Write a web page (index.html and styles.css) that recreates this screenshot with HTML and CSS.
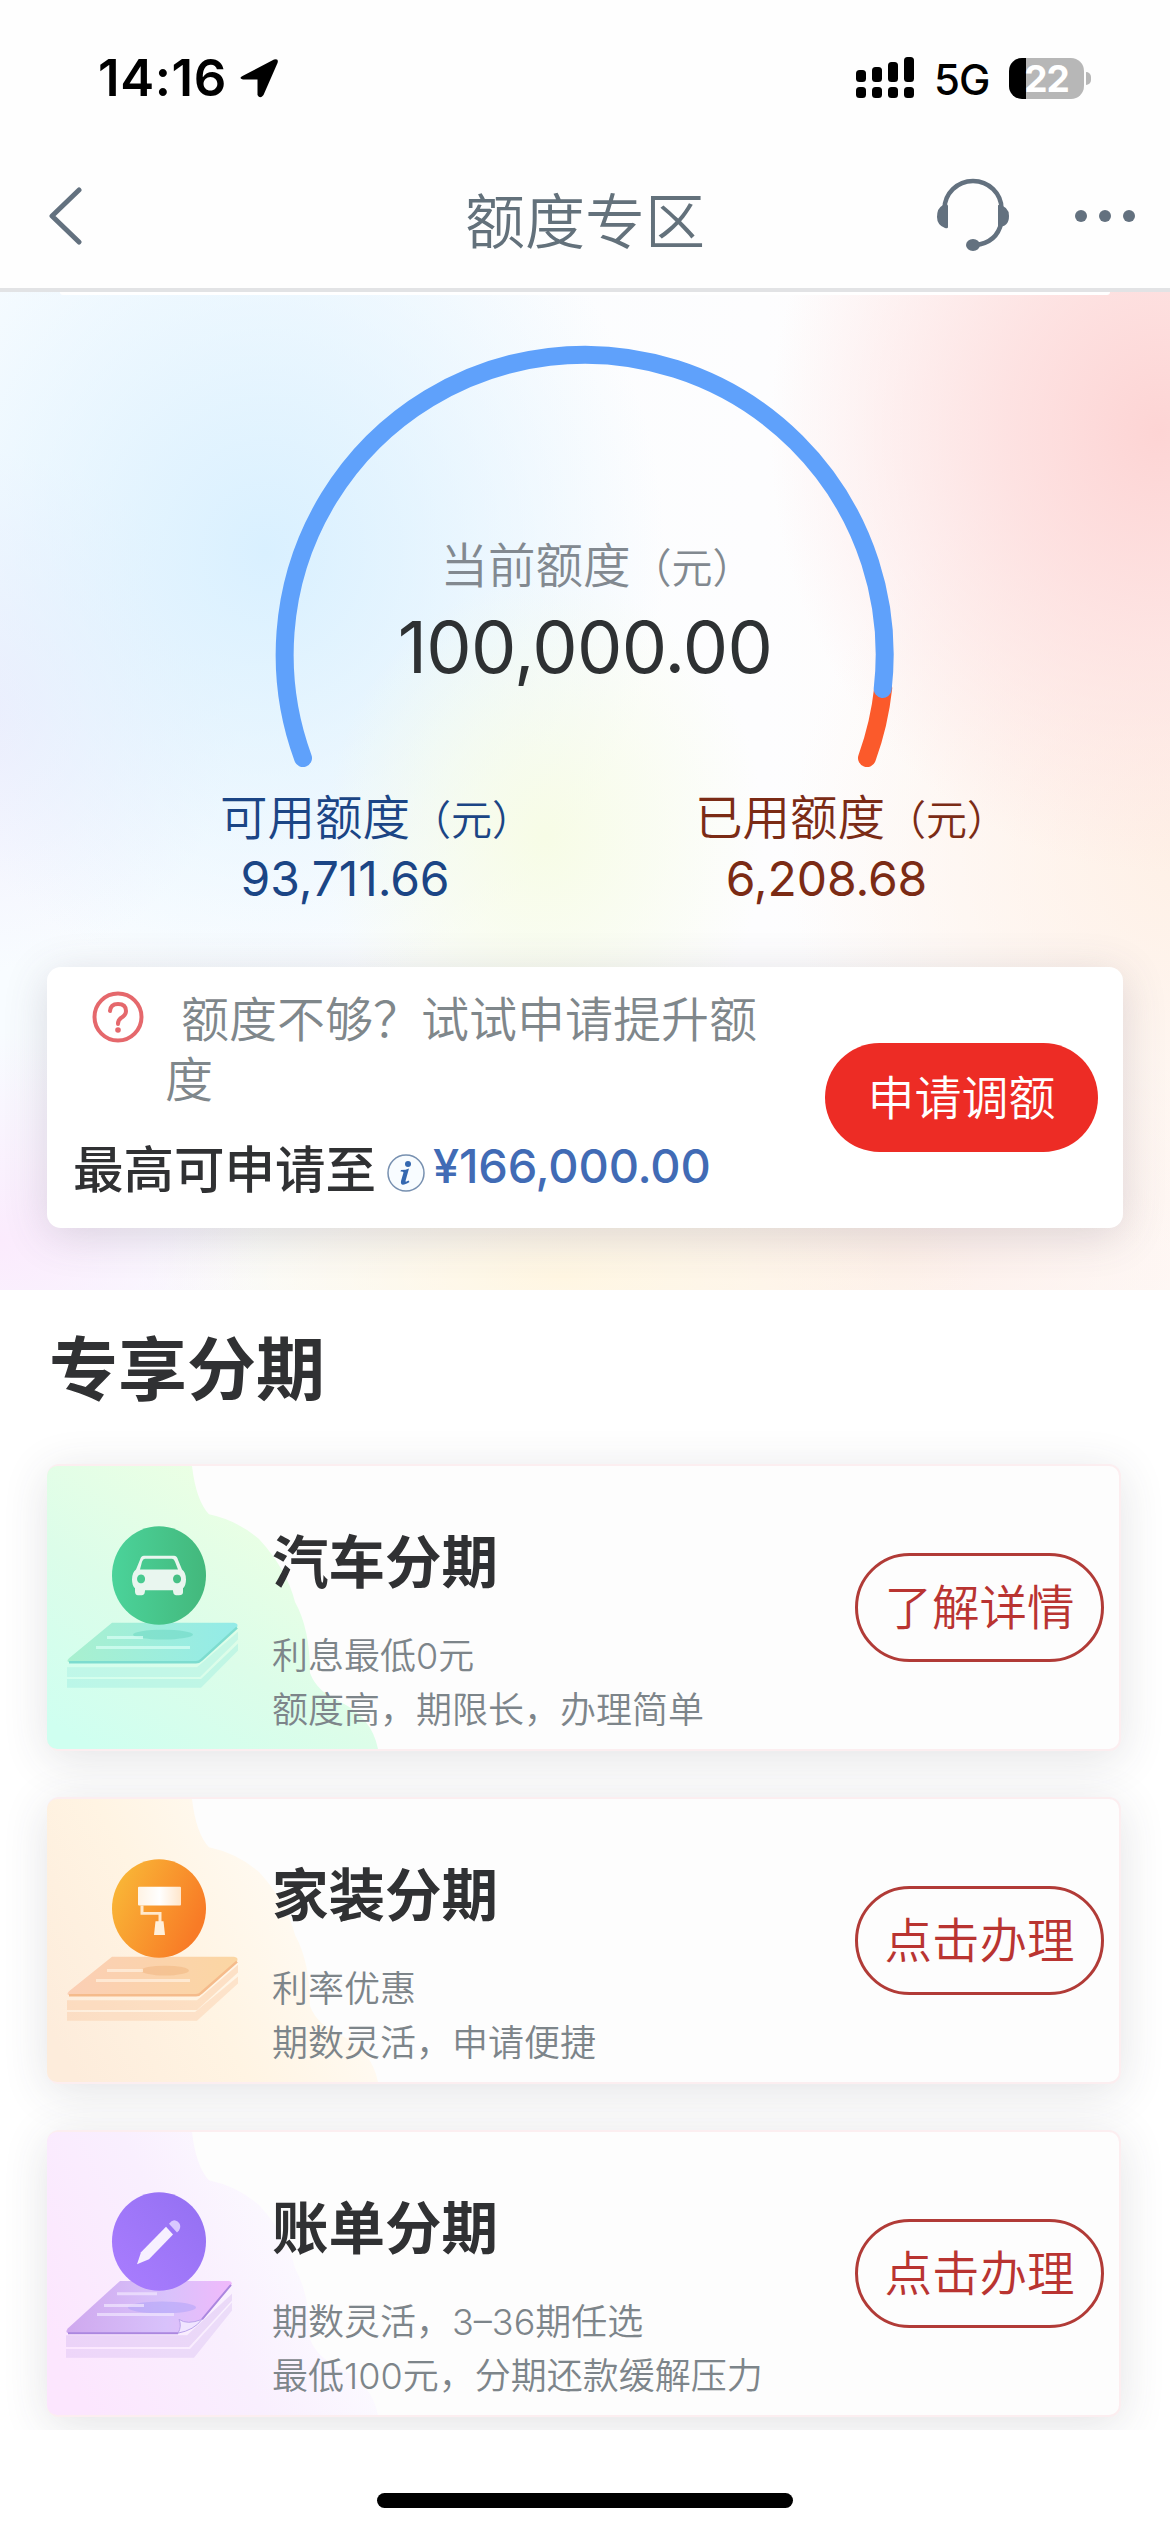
FILE: index.html
```html
<!DOCTYPE html>
<html lang="zh-CN">
<head>
<meta charset="utf-8">
<title>额度专区</title>
<link rel="stylesheet" href="styles.css">
</head>
<body>
<header class="top">
  <div class="status">
    <span class="time">14:16</span>
    <svg class="locate" width="40" height="40" viewBox="0 0 40 40"><path d="M3.500 18 L35 1.500 Q40 0 38.500 5 L24.500 37 Q21 41.500 18.500 37 L18.500 21.500 L4 21.500 Q-.8 20.500 3.500 18Z"/></svg>
    <svg class="signal" width="58" height="42" viewBox="0 0 58 42"><rect y="13" width="10" height="12" rx="3.500"/><rect x="16" y="10" width="10" height="15" rx="3.500"/><rect x="32" y="5" width="10" height="20" rx="3.500"/><rect x="48" y="0" width="10" height="25" rx="3.500"/><rect y="30" width="10" height="11" rx="3.500"/><rect x="16" y="30" width="10" height="11" rx="3.500"/><rect x="32" y="30" width="10" height="11" rx="3.500"/><rect x="48" y="30" width="10" height="11" rx="3.500"/></svg>
    <span class="network">5G</span>
    <span class="battery">22</span>
    <span class="battery-tip"></span>
  </div>
  <nav class="nav">
    <svg class="back" width="34" height="58" viewBox="0 0 34 58"><path d="M31 3 L4 29 L31 55"/></svg>
    <h1>额度专区</h1>
    <svg class="service" width="76" height="76" viewBox="0 0 76 76"><path class="line" d="M9.500 31 A28.500 28 0 0 1 66.500 31 M66.500 44 Q62 65 40 67"/><path d="M13 28 V49 Q13 51 10 50 Q2 47 2 39 Q2 30 8 27 Q13 25 13 28Z M63 27 Q74 28 74 38 Q74 49 63 49Z"/><ellipse cx="38" cy="67" rx="7" ry="6"/></svg>
    <svg class="more" width="60" height="14" viewBox="0 0 60 14"><circle cx="6" cy="7" r="6"/><circle cx="30" cy="7" r="6"/><circle cx="54" cy="7" r="6"/></svg>
  </nav>
</header>

<section class="hero">
  <div class="panel-edge"></div>
  <div class="gauge">
    <svg class="dial" width="620" height="430" viewBox="0 0 620 430"><path d="M608.200 346 A300 300 0 0 1 592 416" stroke="#fb5a2b"/><path d="M28 416 A300 300 0 1 1 607.700 347" stroke="#5fa1fb"/></svg>
    <div class="total">
      <div class="label">当前额度<small>（元）</small></div>
      <div class="sum">100,000.00</div>
    </div>
  </div>
  <div class="split">
    <div class="part available"><div class="label">可用额度<small>（元）</small></div><div class="amount">93,711.66</div></div>
    <div class="part used"><div class="label">已用额度<small>（元）</small></div><div class="amount">6,208.68</div></div>
  </div>
  <div class="apply">
    <div class="apply-text">
      <div class="ask">
        <svg width="52" height="52" viewBox="0 0 52 52"><circle cx="26" cy="26" r="23.500"/><path d="M18 20 Q18.500 13 26 13 Q34 13 34 20 Q34 24 29 27 Q26 29 26 33"/><circle class="dot" cx="26" cy="39" r="2.800"/></svg>
        <p>额度不够？试试申请提升额度</p>
      </div>
      <div class="max">
        <b>最高可申请至</b>
        <svg width="38" height="38" viewBox="0 0 38 38"><circle cx="19" cy="19" r="18"/><circle class="dot" cx="21" cy="10" r="3"/><path d="M14 16 Q19 16 22 14.500 L18.500 27 Q18.500 28.500 21.500 26.500 L22.500 28 Q13 34 14 27 L16.500 18.500 Q16.500 17.300 13.500 17.500Z"/></svg>
        <span>¥166,000.00</span>
      </div>
    </div>
    <button class="primary">申请调额</button>
  </div>
</section>

<main class="plans">
  <h2>专享分期</h2>
  <article class="plan">
    <svg class="art" width="340" height="283" viewBox="0 0 340 287" preserveAspectRatio="none">
      <defs>
        <linearGradient id="g1" x1="0" y1=".9" x2=".6" y2=".1"><stop stop-color="#cffff0"/><stop offset=".5" stop-color="#dcfde9"/><stop offset="1" stop-color="#ebffe4"/></linearGradient>
        <linearGradient id="g2"><stop stop-color="#4bd39a"/><stop offset="1" stop-color="#43b87c"/></linearGradient>
        <linearGradient id="g3"><stop stop-color="#a9f0cf"/><stop offset="1" stop-color="#93ebe8"/></linearGradient>
      </defs>
      <path fill="url(#g1)" d="M0 0H145Q149 35 162 49Q190 55 212 74Q240 105 248 138Q263 165 263 210Q270 229 293 239Q325 255 331 287H0Z"/>
      <path fill="#8fe8dc" opacity=".35" d="M20 225H154L191 187V180L154 216H20Z"/>
      <path fill="#9aeadf" opacity=".35" d="M20 214H153L191 176V168L150 204H20Z"/>
      <path fill="url(#g3)" d="M65 159H187Q193 160 189 165L155 196Q152 199 149 199H24Q18 199 22 195Z"/>
      <path fill="none" stroke="#7ddccf" stroke-width="2.500" d="M190 164L155 196Q152 199 149 199H22"/>
      <ellipse cx="116" cy="171" rx="30" ry="5" fill="#61d2bd" opacity=".45"/><path d="M49 184H143M60 174H96" stroke="#d9fff5" stroke-width="3" opacity=".7"/>
      <ellipse cx="112" cy="111" rx="47" ry="50" fill="url(#g2)"/>
      <path fill="#e9f6ef" fill-rule="evenodd" d="M97 91H127Q130 91 131 95L135 105Q139 108 139 115Q139 121 136 124V128Q136 131 132 131H129Q126 131 126 126H98Q98 131 95 131H91Q88 131 88 127V124Q85 121 85 115Q85 108 89 105L93 95Q94 91 97 91ZM98 94Q96 94 95 97L93 105H131L128 97Q127 94 125 94ZM94 110a4 4.500 0 1 0 .1 0ZM130 110a4 4.500 0 1 0 .1 0Z"/>
    </svg>
    <div class="info"><h3>汽车分期</h3><p>利息最低0元<br>额度高，期限长，办理简单</p></div>
    <button class="outline">了解详情</button>
  </article>
  <article class="plan">
    <svg class="art" width="340" height="283" viewBox="0 0 340 287" preserveAspectRatio="none">
      <defs>
        <linearGradient id="o1" x1="0" y1=".8" x2=".85" y2=".4"><stop stop-color="#fdecdb"/><stop offset=".5" stop-color="#fff4e3"/><stop offset="1" stop-color="#fffbf4"/></linearGradient>
        <linearGradient id="o2" x1="0" y1="0" x2="1" y2=".5"><stop stop-color="#f9be39"/><stop offset="1" stop-color="#f87b26"/></linearGradient>
        <linearGradient id="o3"><stop stop-color="#fbcfb5"/><stop offset="1" stop-color="#fbd6a3"/></linearGradient>
        <linearGradient id="o4"><stop stop-color="#fff3e4"/><stop offset=".5" stop-color="#fff"/><stop offset="1" stop-color="#ffe6cb"/></linearGradient>
      </defs>
      <path fill="url(#o1)" d="M0 0H145Q149 35 162 49Q190 55 212 74Q240 105 248 138Q263 165 263 210Q270 229 293 239Q325 255 331 287H0Z"/>
      <path fill="#f9b98a" opacity=".3" d="M20 225H150L191 187V180L148 216H20Z"/>
      <path fill="#f9b98a" opacity=".35" d="M20 214H150L191 176V168L150 204H20Z"/>
      <path fill="url(#o3)" d="M65 160H187Q193 161 189 166L155 196Q152 199 149 199H24Q18 199 22 195Z"/>
      <path fill="none" stroke="#f5bb8b" stroke-width="2.500" d="M190 165L155 196Q152 199 149 199H22"/>
      <ellipse cx="118" cy="174" rx="24" ry="5" fill="#eaa76a" opacity=".35"/><path d="M49 184H143M60 174H96" stroke="#fff0df" stroke-width="3" opacity=".75"/>
      <ellipse cx="112" cy="111" rx="47" ry="50" fill="url(#o2)"/>
      <rect x="91" y="89" width="43" height="19" rx="1" fill="url(#o4)"/><path d="M95 108V116H113V125" fill="none" stroke="#ffe9cd" stroke-width="3"/><path d="M108.500 124H116.500L118 138H107Z" fill="#fff0dc"/>
    </svg>
    <div class="info"><h3>家装分期</h3><p>利率优惠<br>期数灵活，申请便捷</p></div>
    <button class="outline">点击办理</button>
  </article>
  <article class="plan">
    <svg class="art" width="340" height="283" viewBox="0 0 340 287" preserveAspectRatio="none">
      <defs>
        <linearGradient id="p1" x1="0" y1=".7" x2=".8" y2=".35"><stop stop-color="#fce6fe"/><stop offset=".55" stop-color="#f9effe"/><stop offset="1" stop-color="#fcfbff"/></linearGradient>
        <linearGradient id="p2" x1="0" y1="1" x2="1" y2="0"><stop stop-color="#aa7dff"/><stop offset="1" stop-color="#9370f2"/></linearGradient>
        <linearGradient id="p3"><stop stop-color="#cfa8ee"/><stop offset=".6" stop-color="#d8c2fb"/><stop offset="1" stop-color="#f0b9fb"/></linearGradient>
      </defs>
      <path fill="url(#p1)" d="M0 0H145Q149 35 162 49Q190 55 212 74Q240 105 248 138Q263 165 263 210Q270 229 293 239Q325 255 331 287H0Z"/>
      <path fill="#ceb0ef" opacity=".3" d="M19 229H147L185 181V173L143 220H19Z"/>
      <path fill="#ceb0ef" opacity=".35" d="M19 218H142L185 171V164L140 206H19Z"/>
      <path fill="url(#p3)" d="M73 151H182Q187 152 183 157L155 190Q146 200 131 204H23Q17 204 21 199Z"/>
      <path fill="none" stroke="#ab87df" stroke-width="2" d="M184 155L155 190M131 204H21"/>
      <path fill="#f0e5ff" stroke="#b9a3ea" stroke-width="1" d="M131 204Q135 197 132 190Q140 196 155 190Q147 201 131 204Z"/>
      <ellipse cx="115" cy="178" rx="34" ry="6" fill="#a79df8" opacity=".45"/><path d="M50 185H127M57 176H97M70 164H110" stroke="#f2e8ff" stroke-width="3" opacity=".7"/>
      <ellipse cx="112" cy="111" rx="47" ry="50" fill="url(#p2)"/>
      <path fill="#f7f0ff" d="M90 134L94 122L119 96L126 104L102 129Z"/><path fill="#d9c8ff" d="M122 93Q126 87 131 91Q135 95 132 100L130 102Z"/>
    </svg>
    <div class="info"><h3>账单分期</h3><p>期数灵活，3–36期任选<br>最低100元，分期还款缓解压力</p></div>
    <button class="outline">点击办理</button>
  </article>
</main>
<footer class="home"><span></span></footer>
</body>
</html>
```
FILE: styles.css
```css
* { box-sizing: border-box; }
body, h1, h2, h3, p { margin: 0; }
body {
  width: 1170px;
  height: 2532px;
  overflow: hidden;
  display: flex;
  flex-direction: column;
  background: #fff;
  color: #303133;
  font-family: Inter, "Noto Sans CJK SC", sans-serif;
}
svg { display: block; flex: none; }
button { font-family: inherit; font-weight: 350; white-space: nowrap; padding: 0 0 6px; }

.top { height: 292px; border-bottom: 4px solid #e2e3e5; background: #fefefe; }
.status { height: 156px; display: flex; align-items: center; padding: 0 79px 0 98px; color: #000; }
.time { font-size: 51px; font-weight: 600; line-height: 60px; letter-spacing: .6px; width: 141px; }
.signal { margin-left: auto; }
.network { margin-left: 20px; width: 75px; font-size: 42px; font-weight: 500; letter-spacing: -1px; padding-top: 2px; }
.battery {
  width: 75px; height: 41px; border-radius: 13px; line-height: 41px; text-align: center;
  background: linear-gradient(90deg, #000 17px, #b7b7b7 17px);
  color: #fff; font-size: 37px; font-weight: 700; letter-spacing: -1px;
}
.battery-tip { width: 5px; height: 13px; margin-left: 2px; border-radius: 0 7px 7px 0; background: #b7b7b7; }
.nav { height: 120px; display: flex; align-items: center; padding: 0 35px 0 48px; }
.nav h1 { width: 244px; margin-left: 383px; padding-top: 11px; font-size: 60px; font-weight: 350; line-height: 80px; color: #63717b; }
.back { fill: none; stroke: #63717f; stroke-width: 5; stroke-linecap: round; stroke-linejoin: round; }
.service { margin-left: auto; fill: #63717f; }
.service .line { fill: none; stroke: #63717f; stroke-width: 4.500; }
.more { margin-left: 64px; fill: #63717f; }

.hero {
  height: 998px;
  display: flex;
  flex-direction: column;
  align-items: center;
  background:
    radial-gradient(ellipse 390px 440px at 1160px 140px, #fdd4d4 0, #fddcdccc 40%, #fddada00 100%),
    radial-gradient(ellipse 220px 260px at 545px 545px, #f7fce6 0, #f7fce600 100%),
    radial-gradient(ellipse 400px 440px at 265px 260px, #d9f0ff 0, #dcf1febb 35%, #dcf1fe00 100%),
    radial-gradient(ellipse 260px 260px at -20px 420px, #f0edfd 0, #f0edfd00 100%),
    radial-gradient(ellipse 260px 210px at 0 950px, #fbebfd 0, #fbebfd00 100%),
    radial-gradient(ellipse 400px 400px at 1190px 560px, #fef0e6 0, #fef0e600 100%),
    radial-gradient(ellipse 420px 130px at 560px 985px, #fff6e2 0, #fff6e200 100%),
    radial-gradient(ellipse 420px 240px at 900px 960px, #fdefea 0, #fdefea00 100%),
    linear-gradient(90deg, #f8fcff, #fdfdfe 65%, #fffbf9);
}
.panel-edge { width: 1050px; height: 3px; background: #fff; border-radius: 0 0 8px 8px; }
.gauge { display: grid; justify-items: center; margin-top: 47px; }
.gauge > * { grid-area: 1 / 1; }
.dial { fill: none; stroke-width: 18; stroke-linecap: round; }
.total { padding-top: 192px; text-align: center; }
.label { font-size: 47.500px; font-weight: 350; line-height: 64px; white-space: nowrap; }
.label small { font-size: 41px; }
.total .label { padding-left: 24px; color: #828990; }
.sum { margin-top: -3px; font-size: 72px; font-weight: 380; line-height: 100px; letter-spacing: -.7px; color: #2e3133; }
.split { width: 100%; display: flex; margin-top: 14px; }
.part { width: 310px; }
.available { margin-left: 220px; color: #1b4585; }
.used { margin-left: 165px; color: #7b2b15; }
.amount { width: 250px; margin-top: -3px; text-align: center; font-size: 48px; font-weight: 385; line-height: 60px; letter-spacing: -.1px; }
.used .amount { width: 263px; }
.apply {
  width: 1076px; height: 261px; margin-top: 58px; padding: 0 25px 0 26px;
  display: flex; justify-content: space-between; align-items: center;
  background: #fff; border-radius: 14px; box-shadow: 0 8px 44px rgba(80, 70, 90, .19);
}
.apply-text { width: 715px; height: 261px; padding-top: 23px; }
.ask { display: flex; padding-left: 19px; }
.ask svg { margin-top: 1px; fill: none; stroke: #e5686c; stroke-width: 4; stroke-linecap: round; }
.ask .dot { fill: #e5686c; stroke: none; }
.ask p { width: 600px; margin-left: 21px; text-indent: 16px; font-size: 48px; font-weight: 350; line-height: 60px; color: #7f878b; }
.max { display: flex; align-items: center; margin-top: 25px; height: 70px; }
.max b { font-size: 50.500px; font-weight: 500; line-height: 70px; }
.max svg { margin: 5px 8px 0 11px; fill: #3568b0; }
.max svg circle:first-child { fill: #f8fcff; stroke: #7790b0; stroke-width: 1.500; }
.max span { margin-top: -8px; font-size: 47px; font-weight: 550; line-height: 64px; letter-spacing: -.2px; color: #416bb5; }
.primary { width: 273px; height: 109px; border: 0; border-radius: 55px; background: #ed2c25; color: #fff; font-size: 47px; }

.plans { height: 1140px; padding: 0 49px 0 47px; overflow: hidden; background: #fff; }
.plans h2 { padding: 30px 0 0 2px; height: 174px; font-size: 69px; font-weight: 600; line-height: 100px; color: #303133; }
.plan {
  width: 1074px; height: 287px; margin-bottom: 46px;
  display: grid; grid-template-columns: 223px 1fr 249px; align-items: center; padding-right: 15px;
  border: 2px solid #fceef0; border-radius: 12px; background: #fdfdfd;
  box-shadow: 0 8px 46px rgba(60, 60, 70, .14);
}
.art { grid-area: 1 / 1; align-self: start; margin-left: -2px; border-radius: 10px 0 0 10px; }
.info { grid-area: 1 / 2; align-self: start; z-index: 1; padding-top: 57px; }
.info h3 { font-size: 56.500px; font-weight: 600; line-height: 80px; color: #303133; }
.info p { margin-top: 26px; font-size: 36px; font-weight: 350; line-height: 54px; color: #7d858a; white-space: nowrap; }
.outline { grid-area: 1 / 3; height: 109px; border: 3px solid #b13b37; border-radius: 55px; background: none; color: #b93431; font-size: 47.500px; }
.home { height: 102px; display: flex; justify-content: center; padding-top: 63px; background: #fff; }
.home span { width: 416px; height: 15px; border-radius: 8px; background: #000; }
```
